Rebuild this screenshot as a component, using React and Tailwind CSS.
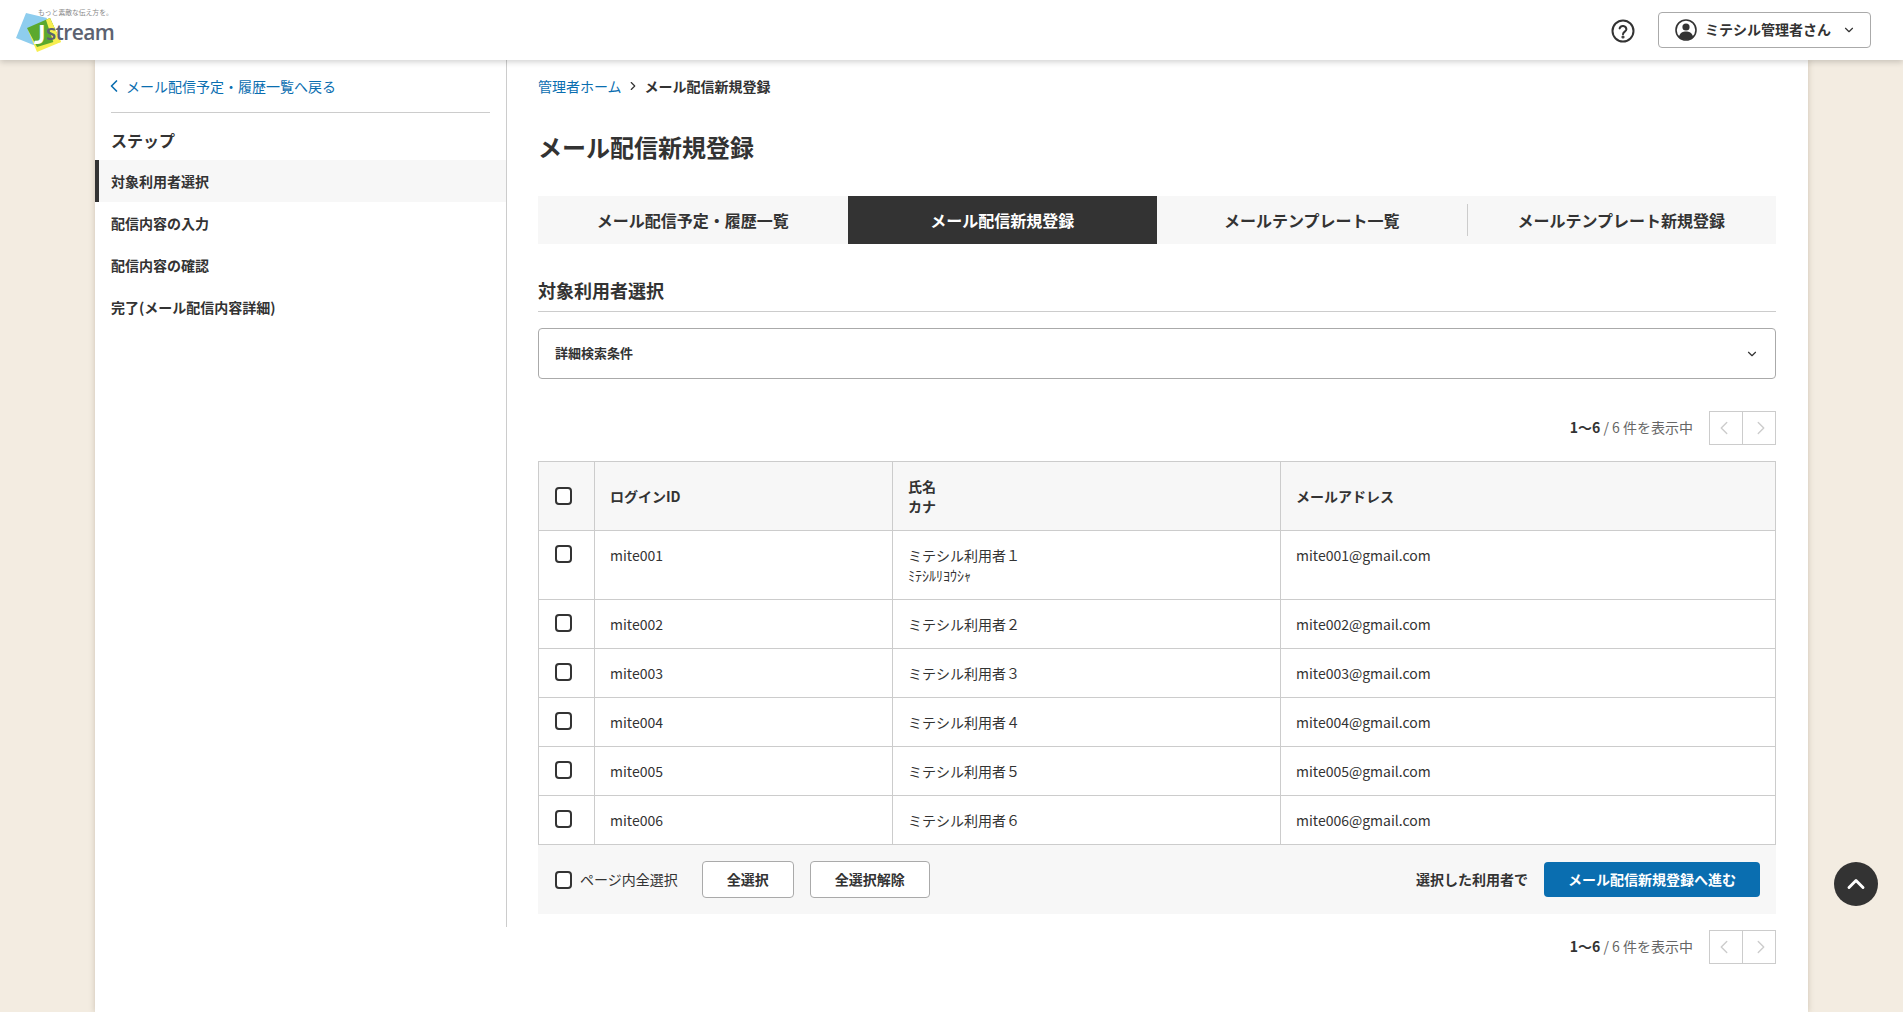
import React from 'react';
import { ChevronLeft, ChevronRight, ChevronDown, ChevronUp } from 'lucide-react';

const users = [
  { id: 'mite001', name: 'ミテシル利用者１', kana: 'ﾐﾃｼﾙﾘﾖｳｼｬ', mail: 'mite001@gmail.com' },
  { id: 'mite002', name: 'ミテシル利用者２', mail: 'mite002@gmail.com' },
  { id: 'mite003', name: 'ミテシル利用者３', mail: 'mite003@gmail.com' },
  { id: 'mite004', name: 'ミテシル利用者４', mail: 'mite004@gmail.com' },
  { id: 'mite005', name: 'ミテシル利用者５', mail: 'mite005@gmail.com' },
  { id: 'mite006', name: 'ミテシル利用者６', mail: 'mite006@gmail.com' },
];

const steps = ['対象利用者選択', '配信内容の入力', '配信内容の確認', '完了(メール配信内容詳細)'];

function Logo() {
  return (
    <div className="relative h-[60px] w-[120px] shrink-0">
      <svg className="absolute left-[14px] top-[10px]" width="50" height="44" viewBox="14 10 50 44">
        <polygon points="26,13 47,18 36,46 16,38" fill="#8ecdee" />
        <polygon points="50,18 61,42 37,52 28,30" fill="#f7ee4f" />
        <polygon points="27,28 50,18 60,40 37,47" fill="#5ba92e" />
        <polygon points="46,20 50,18 61,42 54,44" fill="#f7ee4f" />
      </svg>
      <span className="absolute left-[34px] top-[19px] font-['Lato',sans-serif] text-[27px] font-bold leading-[30px] text-white">J</span>
      <span className="absolute left-[38px] top-[7px] whitespace-nowrap text-[6.8px] leading-[10px] text-[#888]">もっと素敵な伝え方を。</span>
      <span className="absolute left-[46px] top-[17px] whitespace-nowrap font-['Open_Sans',sans-serif] text-[21px] font-semibold leading-[30px] tracking-[-0.6px] text-[#5c6270]">stream</span>
    </div>
  );
}

function Checkbox() {
  return <span className="block h-[18px] w-[17px] rounded-[4px] border-2 border-[#333] bg-white" />;
}

function Pager() {
  return (
    <div className="flex items-center justify-end">
      <p className="-mt-[2px] text-sm text-[#666]">
        <span className="font-bold text-[#333]">1〜6</span> / 6 件を表示中
      </p>
      <div className="ml-4 flex h-[34px] w-[67px] border border-[#ccc]">
        <span className="flex flex-1 items-center justify-center border-r border-[#ccc] pr-1">
          <ChevronLeft className="h-[22px] w-[22px] text-[#ccc]" strokeWidth={1.5} />
        </span>
        <span className="flex flex-1 items-center justify-center pl-1">
          <ChevronRight className="h-[22px] w-[22px] text-[#ccc]" strokeWidth={1.5} />
        </span>
      </div>
    </div>
  );
}

export default function App() {
  return (
    <div className="relative min-h-[1012px] overflow-hidden bg-[#f3ece1] font-['Noto_Sans_CJK_JP','Noto_Sans',sans-serif] text-sm text-[#333]">
      <header className="relative z-10 flex h-[60px] items-center justify-between bg-white pr-[32px] shadow-[0_2px_6px_rgba(0,0,0,0.18)]">
        <Logo />
        <div className="flex items-center gap-[22px]">
          <svg width="26" height="26" viewBox="0 0 26 26" fill="none" stroke="#333" strokeWidth="2" className="mt-[2px]">
            <circle cx="13" cy="13" r="10.5" />
            <path d="M9.6 10.4a3.5 3.5 0 0 1 6.8 .8c0 2.3-3.4 2.6-3.4 5" strokeLinecap="round" />
            <circle cx="13" cy="19" r="0.6" fill="#333" />
          </svg>
          <button className="flex h-[36px] w-[213px] items-center rounded-[4px] border border-[#aaa] pl-[16px] font-bold">
            <svg width="22" height="22" viewBox="0 0 22 22">
              <circle cx="11" cy="11" r="10" fill="none" stroke="#333" strokeWidth="1.6" />
              <circle cx="11" cy="8" r="3.6" fill="#333" />
              <path d="M3.8 18 C5 13.5 8 12.6 11 12.6 S17 13.5 18.2 18 A10 10 0 0 1 3.8 18Z" fill="#333" />
            </svg>
            <span className="ml-2 -mt-[2px]">ミテシル管理者さん</span>
            <ChevronDown className="ml-[11px] h-[14px] w-[14px]" />
          </button>
        </div>
      </header>

      <div className="mx-auto flex min-h-[952px] w-[1713px] bg-white shadow-[0_0_6px_rgba(90,70,40,0.25)]">
        <aside className="h-[867px] w-[412px] shrink-0 border-r border-[#ccc]">
          <div className="mx-4">
            <a className="flex h-[53px] items-center border-b border-[#ccc] text-[#0a6eb0]">
              <ChevronLeft className="-ml-[7px] mr-[2px] h-5 w-5" strokeWidth={2} />
              <span className="-mt-[1px]">メール配信予定・履歴一覧へ戻る</span>
            </a>
            <h3 className="mt-[15px] h-[32px] text-base font-bold leading-[24px]">ステップ</h3>
          </div>
          <ul>
            {steps.map((s, i) => (
              <li
                key={s}
                className={i === 0
                  ? 'flex h-[42px] items-center border-l-4 border-[#333] bg-[#f7f7f7] pl-3 font-bold'
                  : 'flex h-[42px] items-center pl-4 font-bold'}
              >
                {s}
              </li>
            ))}
          </ul>
        </aside>

        <main className="min-w-0 flex-1 pl-[31px] pr-[32px]">
          <nav className="flex h-[51px] items-center">
            <a className="text-[#0a6eb0]">管理者ホーム</a>
            <ChevronRight className="mx-[4.5px] h-[14px] w-[14px]" />
            <span className="font-bold">メール配信新規登録</span>
          </nav>
          <h1 className="mt-[18px] text-2xl font-bold leading-[36px]">メール配信新規登録</h1>

          <div className="mt-[31px] grid h-[48px] grid-cols-4 bg-[#f7f7f7] text-base font-bold">
            <div className="flex items-center justify-center">メール配信予定・履歴一覧</div>
            <div className="flex items-center justify-center bg-[#333] text-white">メール配信新規登録</div>
            <div className="flex items-center justify-center">メールテンプレート一覧</div>
            <div className="relative flex items-center justify-center">
              <span className="absolute bottom-2 left-0 top-2 w-px bg-[#ccc]" />
              メールテンプレート新規登録
            </div>
          </div>

          <h2 className="mt-[33px] h-[35px] border-b border-[#ccc] text-lg font-bold leading-[27px]">対象利用者選択</h2>

          <div className="mt-4 flex h-[51px] items-center justify-between rounded-[4px] border border-[#aaa] px-4">
            <span className="text-[13px] font-bold">詳細検索条件</span>
            <ChevronDown className="h-[14px] w-[14px]" />
          </div>

          <div className="mt-8"><Pager /></div>

          <table className="mt-4 w-full table-fixed border-collapse">
            <colgroup>
              <col className="w-[56px]" />
              <col className="w-[298px]" />
              <col className="w-[388px]" />
              <col />
            </colgroup>
            <thead>
              <tr className="h-[69px] bg-[#f7f7f7] text-left font-bold">
                <th className="border border-[#ccc] pl-4"><Checkbox /></th>
                <th className="border border-[#ccc] px-[15px]">ログインID</th>
                <th className="border border-[#ccc] px-[15px] leading-[20px]">氏名<br />カナ</th>
                <th className="border border-[#ccc] px-[15px]">メールアドレス</th>
              </tr>
            </thead>
            <tbody>
              {users.map((u, i) => (
                <tr key={u.id} className={i === 0 ? 'h-[69px]' : 'h-[49px]'}>
                  <td className="border border-[#ccc] pb-[2px] pl-4 align-top pt-[14px]"><Checkbox /></td>
                  <td className="border border-[#ccc] px-[15px] align-top pt-[14px] leading-[21px]">{u.id}</td>
                  <td className="border border-[#ccc] px-[15px] align-top pt-[14px] leading-[21px]">
                    {u.name}
                    {u.kana && <div className="leading-[18px]">{u.kana}</div>}
                  </td>
                  <td className="border border-[#ccc] px-[15px] align-top pt-[14px] leading-[21px]">{u.mail}</td>
                </tr>
              ))}
            </tbody>
          </table>

          <div className="flex h-[69px] items-center justify-between bg-[#f7f7f7] pl-[16px] pr-4">
            <div className="flex items-center">
              <span className="ml-px"><Checkbox /></span>
              <span className="ml-2 pb-[2px]">ページ内全選択</span>
              <button className="ml-[24px] h-[37px] w-[92px] rounded-[4px] border border-[#aaa] bg-white pb-[2px] font-bold">全選択</button>
              <button className="ml-4 h-[37px] w-[120px] rounded-[4px] border border-[#aaa] bg-white pb-[2px] font-bold">全選択解除</button>
            </div>
            <div className="flex items-center">
              <span className="pb-[2px] font-bold">選択した利用者で</span>
              <button className="ml-4 h-[35px] w-[216px] rounded-[4px] bg-[#0a6eb0] pb-[2px] font-bold text-white">メール配信新規登録へ進む</button>
            </div>
          </div>

          <div className="mt-4"><Pager /></div>
        </main>
      </div>

      <button className="absolute left-[1834px] top-[862px] flex h-[44px] w-[44px] items-center justify-center rounded-full bg-[#333]">
        <ChevronUp className="h-7 w-7 text-white" strokeWidth={2.5} />
      </button>
    </div>
  );
}
